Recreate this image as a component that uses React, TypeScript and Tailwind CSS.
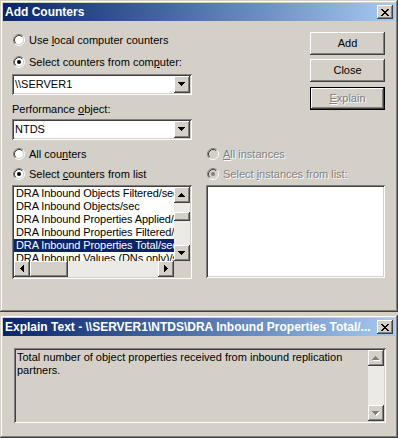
import React from 'react';

const raised =
  '[box-shadow:inset_-1px_-1px_#404040,inset_1px_1px_#ffffff,inset_-2px_-2px_#808080,inset_2px_2px_#d4d0c8]';
const sunken =
  '[box-shadow:inset_1px_1px_#808080,inset_-1px_-1px_#ffffff,inset_2px_2px_#404040,inset_-2px_-2px_#d4d0c8]';
const frame =
  '[box-shadow:inset_-1px_-1px_#404040,inset_1px_1px_#d4d0c8,inset_-2px_-2px_#808080,inset_2px_2px_#ffffff]';
const disabledText = 'text-[#808080] [text-shadow:1px_1px_0_#ffffff]';

const triPaths = {
  down: 'M0 0H7V1H6V2H5V3H4V4H3V3H2V2H1V1H0Z',
  up: 'M3 0H4V1H5V2H6V3H7V4H0V3H1V2H2V1H3Z',
  left: 'M3 0H4V7H3V6H2V5H1V4H0V3H1V2H2V1H3Z',
  right: 'M0 0H1V1H2V2H3V3H4V4H3V5H2V6H1V7H0Z',
};

type Dir = keyof typeof triPaths;

const Tri = ({ dir, disabled }: { dir: Dir; disabled?: boolean }) => {
  const flat = dir === 'up' || dir === 'down';
  return (
    <svg width={flat ? 8 : 5} height={flat ? 5 : 8} shapeRendering="crispEdges" className="shrink-0">
      {disabled && <path d={triPaths[dir]} fill="#fff" transform="translate(1 1)" />}
      <path d={triPaths[dir]} fill={disabled ? '#808080' : '#000'} />
    </svg>
  );
};

const Radio = ({ checked, disabled }: { checked?: boolean; disabled?: boolean }) => (
  <svg width="12" height="12" viewBox="0 0 12 12" className="shrink-0">
    <circle cx="6" cy="6" r="4.5" fill={disabled ? '#d4d0c8' : '#fff'} />
    <path d="M2.11 9.89A5.5 5.5 0 0 1 9.89 2.11" fill="none" stroke="#808080" />
    <path d="M9.89 2.11A5.5 5.5 0 0 1 2.11 9.89" fill="none" stroke="#fff" />
    <path d="M2.82 9.18A4.5 4.5 0 0 1 9.18 2.82" fill="none" stroke="#404040" />
    <path d="M9.18 2.82A4.5 4.5 0 0 1 2.82 9.18" fill="none" stroke="#d4d0c8" />
    {checked && <circle cx="6" cy="6" r="2" fill={disabled ? '#808080' : '#000'} />}
  </svg>
);

const RadioRow = ({
  checked,
  disabled,
  className = '',
  children,
}: {
  checked?: boolean;
  disabled?: boolean;
  className?: string;
  children: React.ReactNode;
}) => (
  <div className={`h-[20px] flex items-center pl-[1px] gap-[4px] ${className}`}>
    <Radio checked={checked} disabled={disabled} />
    <span className={`leading-[13px] whitespace-nowrap ${disabled ? disabledText : ''}`}>{children}</span>
  </div>
);

const ArrowBtn = ({ dir, disabled }: { dir: Dir; disabled?: boolean }) => (
  <div className={`w-[16px] h-[16px] shrink-0 bg-[#d4d0c8] flex items-center justify-center ${raised}`}>
    <Tri dir={dir} disabled={disabled} />
  </div>
);

const Combo = ({ value }: { value: string }) => (
  <div className={`h-[21px] bg-white flex items-center p-[2px] ${sunken}`}>
    <span className="flex-1 pl-[1px] leading-[13px]">{value}</span>
    <div className={`w-[16px] h-[17px] bg-[#d4d0c8] flex items-center justify-center ${raised}`}>
      <Tri dir="down" />
    </div>
  </div>
);

const CloseBox = () => (
  <div className={`w-[16px] h-[14px] shrink-0 bg-[#d4d0c8] flex items-center justify-center ${raised}`}>
    <svg width="8" height="7" shapeRendering="crispEdges">
      <path
        d="M0 0h2v1h-2zM6 0h2v1h-2zM1 1h2v1h-2zM5 1h2v1h-2zM2 2h4v1h-4zM3 3h2v1h-2zM2 4h4v1h-4zM1 5h2v1h-2zM5 5h2v1h-2zM0 6h2v1h-2zM6 6h2v1h-2z"
        fill="#000"
      />
    </svg>
  </div>
);

const TitleBar = ({ title }: { title: string }) => (
  <div className="h-[18px] shrink-0 flex items-center pl-[2px] pr-[2px] bg-gradient-to-r from-[#0a246a] to-[#a6caf0]">
    <span className="flex-1 overflow-hidden whitespace-nowrap text-white font-bold text-[12px] leading-[14px]">
      {title}
    </span>
    <CloseBox />
  </div>
);

const Button = ({ children, isDefault, disabled }: { children: React.ReactNode; isDefault?: boolean; disabled?: boolean }) => (
  <div
    className={`w-[75px] h-[23px] flex items-center justify-center bg-[#d4d0c8] ${
      isDefault ? 'border border-black' : ''
    } ${raised} ${disabled ? disabledText : ''}`}
  >
    <span className="leading-[13px]">{children}</span>
  </div>
);

const counters = [
  'DRA Inbound Objects Filtered/sec',
  'DRA Inbound Objects/sec',
  'DRA Inbound Properties Applied/sec',
  'DRA Inbound Properties Filtered/sec',
  'DRA Inbound Properties Total/sec',
  'DRA Inbound Values (DNs only)/sec',
];

const CounterList = () => (
  <div className={`h-[94px] bg-white p-[2px] flex flex-col ${sunken}`}>
    <div className="flex flex-1 min-h-0">
      <div className="flex-1 min-w-0 overflow-hidden">
        {counters.map((c, i) => (
          <div
            key={c}
            className={`h-[13px] leading-[13px] pl-[2px] whitespace-nowrap tracking-[-0.1px] ${
              i === 4 ? 'bg-[#0a246a] text-white' : ''
            }`}
          >
            {c}
          </div>
        ))}
      </div>
      <div className="w-[16px] flex flex-col bg-[#ebeae6]">
        <ArrowBtn dir="up" />
        <div className="h-[9px]" />
        <div className={`h-[9px] bg-[#d4d0c8] ${raised}`} />
        <div className="flex-1" />
        <ArrowBtn dir="down" />
      </div>
    </div>
    <div className="flex h-[16px]">
      <div className="flex-1 flex bg-[#ebeae6]">
        <ArrowBtn dir="left" />
        <div className={`w-[38px] bg-[#d4d0c8] ${raised}`} />
        <div className="flex-1" />
        <ArrowBtn dir="right" />
      </div>
      <div className="w-[16px] bg-[#d4d0c8]" />
    </div>
  </div>
);

export default function App() {
  return (
    <div className="w-[398px] h-[438px] bg-[#d4d0c8] font-['Liberation_Sans',Arial,sans-serif] text-[11px] text-black overflow-hidden select-none">
      {/* Add Counters */}
      <div className={`h-[312px] p-[3px] flex flex-col ${frame}`}>
        <TitleBar title="Add Counters" />
        <div className="flex gap-[14px] pl-[9px] pt-[9px]">
          <div className="w-[180px] flex flex-col">
            <RadioRow>
              Use <span className="underline">l</span>ocal computer counters
            </RadioRow>
            <RadioRow checked className="mt-[2px]">
              Select counters from com<span className="underline">p</span>uter:
            </RadioRow>
            <div className="mt-[2px]">
              <Combo value="\\SERVER1" />
            </div>
            <div className="h-[16px] mt-[6px] flex items-center">
              <span className="leading-[13px] whitespace-nowrap">
                Performance <span className="underline">o</span>bject:
              </span>
            </div>
            <div className="mt-[2px]">
              <Combo value="NTDS" />
            </div>
            <RadioRow className="mt-[4px]">
              All cou<span className="underline">n</span>ters
            </RadioRow>
            <RadioRow checked>
              Select <span className="underline">c</span>ounters from list
            </RadioRow>
            <div className="mt-[1px]">
              <CounterList />
            </div>
          </div>

          <div className="w-[179px] flex flex-col">
            <div className="flex flex-col items-end">
              <div className="mt-[2px]">
                <Button>Add</Button>
              </div>
              <div className="mt-[4px]">
                <Button>Close</Button>
              </div>
              <div className="mt-[5px]">
                <Button isDefault disabled>
                  <span className="underline">E</span>xplain
                </Button>
              </div>
            </div>
            <RadioRow disabled className="mt-[34px]">
              <span className="underline">A</span>ll instances
            </RadioRow>
            <RadioRow checked disabled>
              Select <span className="underline">i</span>nstances from list:
            </RadioRow>
            <div className={`mt-[1px] h-[93px] bg-white ${sunken}`} />
          </div>
        </div>
      </div>

      {/* Explain Text */}
      <div className={`mt-[3px] h-[123px] p-[3px] flex flex-col ${frame}`}>
        <TitleBar title="Explain Text - \\SERVER1\NTDS\DRA Inbound Properties Total/..." />
        <div className="pl-[11px] pt-[12px]">
          <div className={`w-[372px] h-[75px] p-[2px] flex bg-[#d4d0c8] ${sunken}`}>
            <p className="flex-1 pl-[1px] pt-[1px] leading-[13px]">
              Total number of object properties received from inbound replication partners.
            </p>
            <div className="w-[16px] flex flex-col bg-[#ebeae6]">
              <ArrowBtn dir="up" disabled />
              <div className="flex-1" />
              <ArrowBtn dir="down" disabled />
            </div>
          </div>
        </div>
      </div>
    </div>
  );
}
